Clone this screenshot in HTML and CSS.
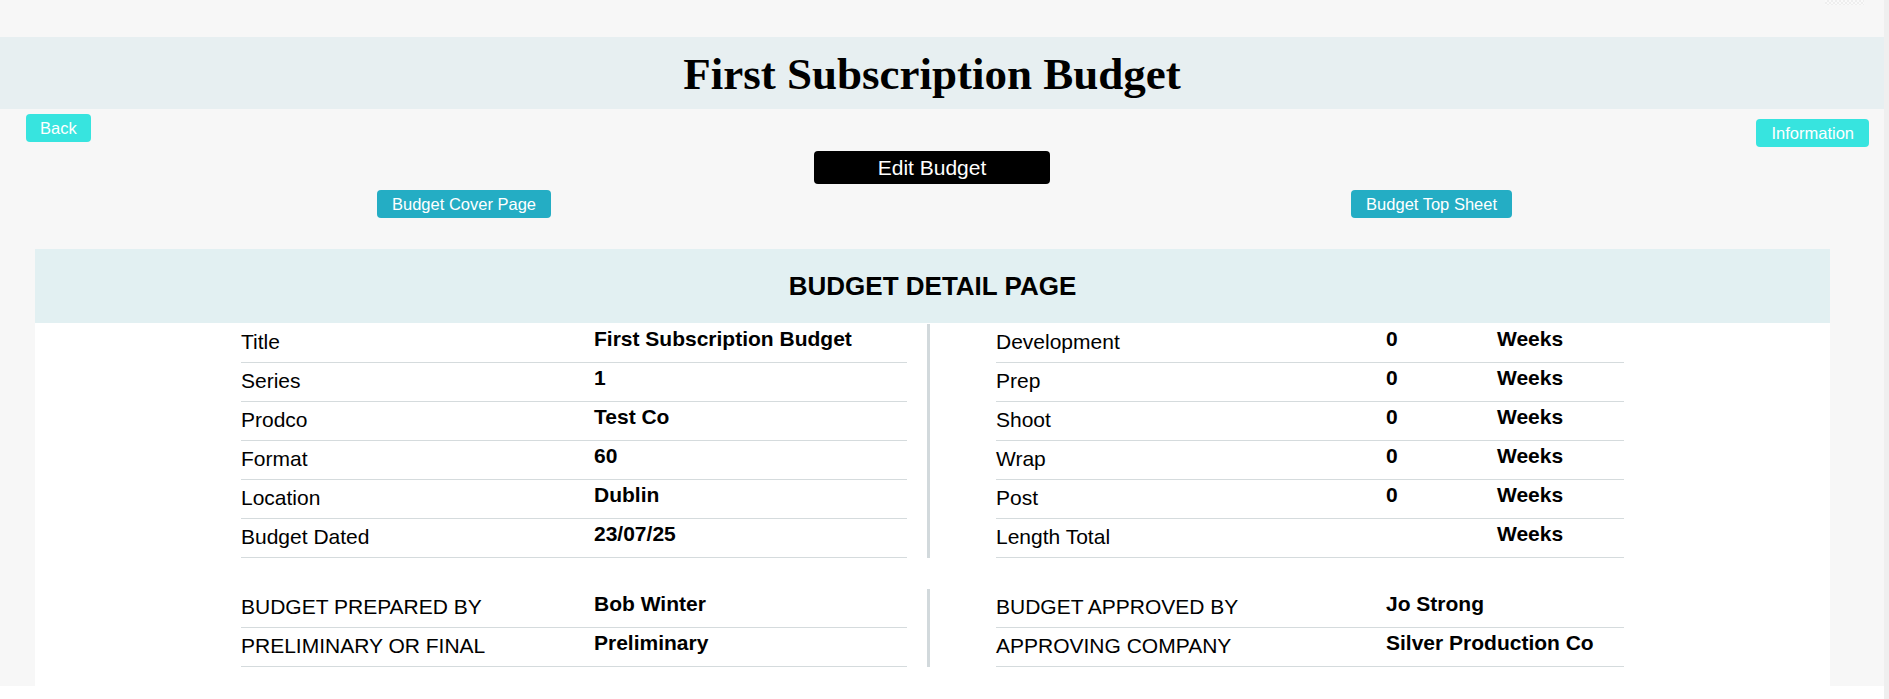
FILE: index.html
```html
<!DOCTYPE html>
<html lang="en">
<head>
<meta charset="utf-8">
<title>First Subscription Budget</title>
<link rel="stylesheet" href="styles.css">
</head>
<body>
<div class="page">
  <div class="checker"></div>
  <header class="band">
    <h1 class="title">First Subscription Budget</h1>
  </header>
  <div class="toolbar">
    <button class="btn btn-light">Back</button>
    <button class="btn btn-light btn-info">Information</button>
  </div>
  <div class="edit-row">
    <button class="btn-edit">Edit Budget</button>
  </div>
  <div class="links-row">
    <button class="btn btn-teal">Budget Cover Page</button>
    <button class="btn btn-teal">Budget Top Sheet</button>
  </div>
  <section class="card">
    <div class="card-head">BUDGET DETAIL PAGE</div>
    <div class="section">
      <div class="block block-left">
        <div class="row"><span class="label">Title</span><span class="value">First Subscription Budget</span></div>
        <div class="row"><span class="label">Series</span><span class="value">1</span></div>
        <div class="row"><span class="label">Prodco</span><span class="value">Test Co</span></div>
        <div class="row"><span class="label">Format</span><span class="value">60</span></div>
        <div class="row"><span class="label">Location</span><span class="value">Dublin</span></div>
        <div class="row"><span class="label">Budget Dated</span><span class="value">23/07/25</span></div>
      </div>
      <div class="divider"></div>
      <div class="block block-right">
        <div class="row row-3"><span class="label">Development</span><span class="value">0</span><span class="value">Weeks</span></div>
        <div class="row row-3"><span class="label">Prep</span><span class="value">0</span><span class="value">Weeks</span></div>
        <div class="row row-3"><span class="label">Shoot</span><span class="value">0</span><span class="value">Weeks</span></div>
        <div class="row row-3"><span class="label">Wrap</span><span class="value">0</span><span class="value">Weeks</span></div>
        <div class="row row-3"><span class="label">Post</span><span class="value">0</span><span class="value">Weeks</span></div>
        <div class="row row-3"><span class="label">Length Total</span><span class="value"></span><span class="value">Weeks</span></div>
      </div>
    </div>
    <div class="section section-2">
      <div class="block block-left">
        <div class="row"><span class="label">BUDGET PREPARED BY</span><span class="value">Bob Winter</span></div>
        <div class="row"><span class="label">PRELIMINARY OR FINAL</span><span class="value">Preliminary</span></div>
      </div>
      <div class="divider"></div>
      <div class="block block-right">
        <div class="row row-2r"><span class="label">BUDGET APPROVED BY</span><span class="value">Jo Strong</span></div>
        <div class="row row-2r"><span class="label">APPROVING COMPANY</span><span class="value">Silver Production Co</span></div>
      </div>
    </div>
  </section>
</div>
<div class="rail"></div>
</body>
</html>
```

FILE: styles.css
```css
* { box-sizing: border-box; }

html, body {
  margin: 0;
  padding: 0;
  background: #ffffff;
}

body {
  display: flex;
  align-items: flex-start;
  font-family: "Liberation Sans", Arial, sans-serif;
  color: #000;
}

.page {
  position: relative;
  width: 1884px;
  height: 686px;
  background: #f7f7f7;
  padding-top: 37px;
  display: flex;
  flex-direction: column;
}

.rail {
  width: 5px;
  height: 699px;
  background: #efefef;
}

.checker {
  position: absolute;
  top: 0;
  left: 1825px;
  width: 39px;
  height: 5px;
  background: repeating-conic-gradient(#eeeeee 0 25%, #fafafa 0 50%) 0 0 / 4px 4px;
}

.band {
  height: 72px;
  background: #e7eff1;
  display: flex;
  justify-content: center;
  padding: 2px 20px 0 0;
}

.title {
  margin: 0;
  font-family: "Liberation Serif", "Times New Roman", serif;
  font-weight: bold;
  font-size: 45px;
  line-height: 70px;
  letter-spacing: 0;
}

.toolbar {
  display: flex;
  justify-content: space-between;
  align-items: flex-start;
  padding: 5px 15px 0 26px;
}

.btn {
  height: 28px;
  border: none;
  border-radius: 4px;
  color: #fff;
  font-family: "Liberation Sans", Arial, sans-serif;
  font-size: 16.5px;
  padding: 0 14px;
  line-height: 28px;
}

.btn-light { background: #37e4df; }
.btn-info { margin-top: 5px; padding: 0 15px; }
.btn-teal { background: #24adc4; padding: 0 15px; }

.edit-row {
  display: flex;
  justify-content: center;
  padding-right: 20px;
  margin-top: 4px;
}

.btn-edit {
  width: 236px;
  height: 33px;
  background: #000;
  color: #fff;
  border: none;
  border-radius: 4px;
  font-family: "Liberation Sans", Arial, sans-serif;
  font-size: 21px;
  padding: 0;
}

.links-row {
  display: flex;
  justify-content: space-between;
  padding: 0 372px 0 377px;
  margin-top: 6px;
}

.card {
  margin: 31px 54px 0 35px;
  background: #fff;
  padding-bottom: 19px;
}

.card-head {
  height: 74px;
  background: #e2f0f2;
  display: flex;
  align-items: center;
  justify-content: center;
  font-weight: bold;
  font-size: 26px;
  padding-top: 1px;
}

.section {
  display: flex;
  padding-left: 206px;
  padding-top: 1px;
}

.section-2 { margin-top: 30px; }

.block-left { width: 666px; }
.block-right { width: 628px; margin-left: 66px; }

.divider {
  width: 3px;
  margin-left: 20px;
  background: #d2d9dc;
}

.row {
  display: grid;
  grid-template-columns: 353px 1fr;
  height: 39px;
  border-bottom: 1px solid #d5dbdd;
  font-size: 21px;
  line-height: 24px;
}

.row-3 { grid-template-columns: 390px 111px 1fr; }
.row-2r { grid-template-columns: 390px 1fr; }

.label {
  padding-top: 6px;
  white-space: nowrap;
}

.value {
  font-weight: bold;
  padding-top: 3px;
  white-space: nowrap;
}
```
